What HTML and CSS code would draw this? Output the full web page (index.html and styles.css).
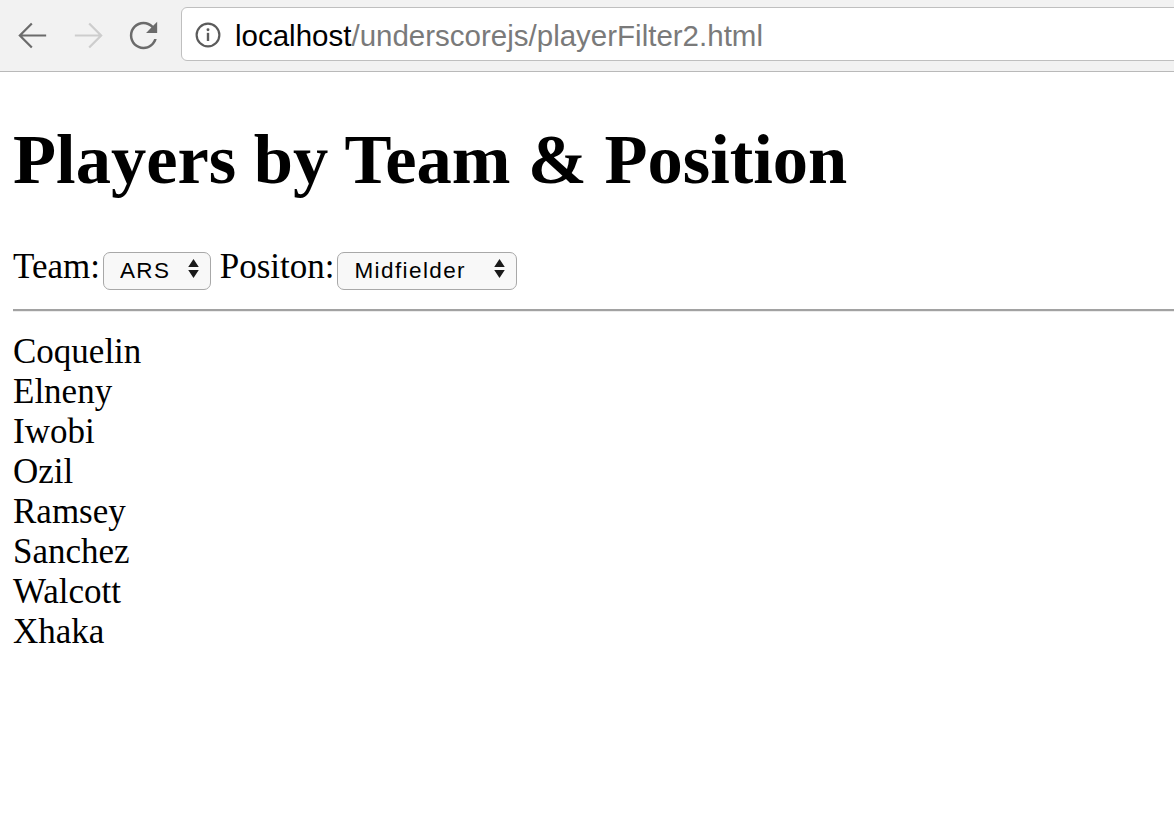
FILE: index.html
```html
<!DOCTYPE html>
<html>
<head>
<meta charset="utf-8">
<title>playerFilter2</title>
<link rel="stylesheet" href="styles.css">
</head>
<body>
<div class="toolbar">
  <svg class="nav-icon back" viewBox="0 0 24 24" width="41" height="41"><path d="M20 12H4.6M11.6 5L4.6 12l7 7" fill="none" stroke="currentColor" stroke-width="1.3"/></svg>
  <svg class="nav-icon fwd" viewBox="0 0 24 24" width="41" height="41"><path d="M4 12h15.4M12.4 5l7 7-7 7" fill="none" stroke="currentColor" stroke-width="1.3"/></svg>
  <svg class="nav-icon reload" viewBox="0 0 24 24" width="41" height="41"><path d="M17.65 6.35A7.96 7.96 0 0 0 12 4c-4.42 0-8 3.58-8 8s3.58 8 8 8c3.73 0 6.84-2.55 7.73-6h-1.5c-.86 2.6-3.3 4.55-6.23 4.55-3.62 0-6.55-2.930-6.55-6.55S8.380 5.45 12 5.45c1.8 0 3.44.74 4.63 1.92L13.5 10.5H20V4l-2.35 2.35z" fill="currentColor"/></svg>
  <div class="omnibox">
    <svg class="info" viewBox="0 0 24 24" width="26" height="26"><circle cx="12" cy="12" r="10.5" fill="none" stroke="currentColor" stroke-width="2"/><rect x="10.9" y="10" width="2.2" height="7.5" fill="currentColor"/><circle cx="12" cy="7.2" r="1.35" fill="currentColor"/></svg>
    <span class="url"><span class="host">localhost</span>/underscorejs/playerFilter2.html</span>
  </div>
</div>
<main class="page">
  <h1 class="title">Players by Team &amp; Position</h1>
  <div class="filters">Team:<span class="select-wrap team"><select class="picker"><option>ARS</option></select><svg class="arrows" viewBox="0 0 10 18" width="11" height="19"><path d="M0 7.5L5 0l5 7.5zM0 10.5h10L5 18z" fill="#1a1a1a"/></svg></span> Positon:<span class="select-wrap pos"><select class="picker"><option>Midfielder</option></select><svg class="arrows" viewBox="0 0 10 18" width="11" height="19"><path d="M0 7.5L5 0l5 7.5zM0 10.5h10L5 18z" fill="#1a1a1a"/></svg></span></div>
  <hr class="rule">
  <div class="players">
    <div>Coquelin</div>
    <div>Elneny</div>
    <div>Iwobi</div>
    <div>Ozil</div>
    <div>Ramsey</div>
    <div>Sanchez</div>
    <div>Walcott</div>
    <div>Xhaka</div>
  </div>
</main>
</body>
</html>
```

FILE: styles.css
```css
html, body {
  margin: 0;
  padding: 0;
  background: #fff;
}
body {
  font-family: "Liberation Serif", "Times New Roman", serif;
  font-size: 35px;
  color: #000;
  overflow: hidden;
}
.toolbar {
  display: flex;
  align-items: flex-start;
  height: 64px;
  padding: 7px 0 0 12px;
  background: #f2f2f2;
  border-bottom: 1px solid #b9b9b9;
}
.nav-icon {
  flex: none;
  margin-top: 8px;
}
.back { color: #6b6b6b; }
.fwd { color: #cdcdcd; margin-left: 15px; }
.reload { color: #6b6b6b; margin-left: 14px; }
.omnibox {
  flex: 1;
  display: flex;
  align-items: center;
  height: 52px;
  margin-left: 17px;
  margin-right: -20px;
  padding-left: 13px;
  background: #fff;
  border: 1px solid #bfbfbf;
  border-radius: 6px;
}
.info {
  color: #5b5b5b;
  flex: none;
  margin-top: 2px;
}
.url {
  margin-left: 14px;
  margin-top: 3px;
  font-family: "Liberation Sans", Arial, sans-serif;
  font-size: 29.5px;
  color: #7a7a7a;
  white-space: nowrap;
}
.host { color: #000; }
.page {
  padding: 0 0 0 13px;
}
.title {
  font-size: 70.5px;
  font-weight: bold;
  margin: 47px 0;
}
.filters {
  white-space: nowrap;
}
.select-wrap {
  position: relative;
  display: inline-block;
  margin-left: 3px;
}
.picker {
  appearance: none;
  -webkit-appearance: none;
  box-sizing: border-box;
  height: 38px;
  margin: 0;
  padding: 0 0 0 16px;
  font-family: "Liberation Sans", Arial, sans-serif;
  font-size: 22.5px;
  letter-spacing: 1.4px;
  color: #000;
  background: #f8f8f8;
  border: 1.5px solid #a8a8a8;
  border-radius: 7px;
}
.team .picker { width: 108px; }
.pos .picker { width: 180px; }
.arrows {
  position: absolute;
  right: 12px;
  top: 50%;
  margin-top: -9.5px;
  pointer-events: none;
}
.rule {
  margin: 19px 0 20px;
  height: 0;
  border: 0;
  border-top: 2px solid #a2a2a2;
  border-bottom: 1px solid #ececec;
}
.players div {
  line-height: normal;
}
```
